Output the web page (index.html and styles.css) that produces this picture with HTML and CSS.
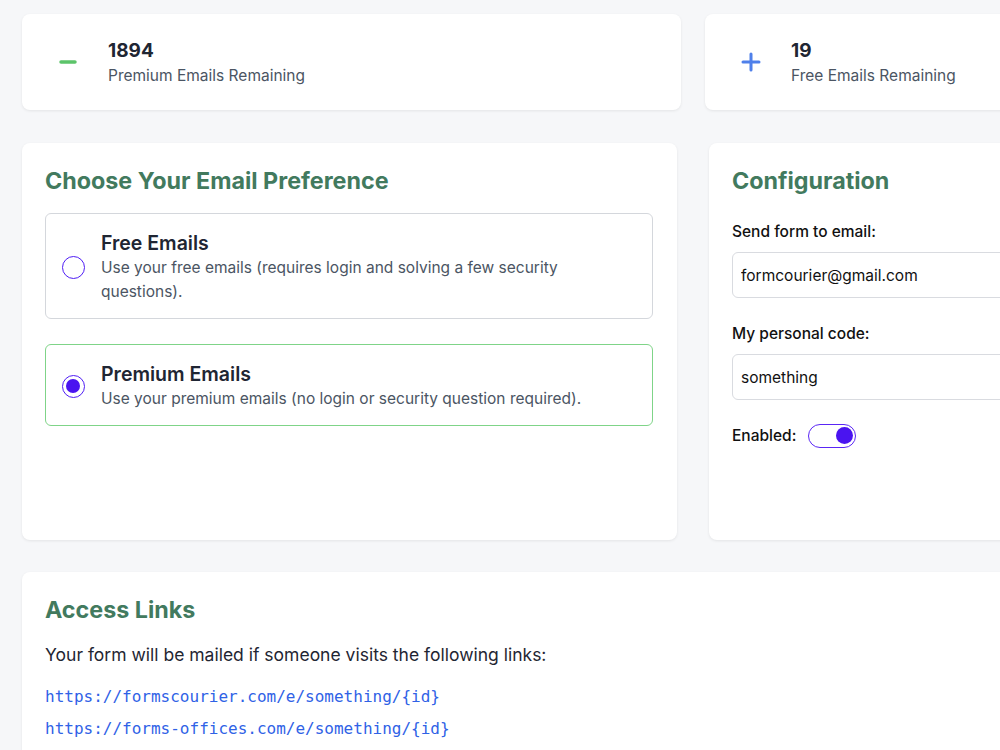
FILE: index.html
```html
<html>

<head>
    <title>Form Courier Settings</title>
    <link rel="stylesheet" href="styles.css">
</head>

<body>
    <div class="page">
        <div class="stats">
            <div class="card stat-card">
                <div class="stat-icon">
                    <svg width="18" height="18" viewBox="0 0 18 18">
                        <line x1="2" y1="9" x2="16" y2="9" stroke="#5cc46a" stroke-width="3.5" stroke-linecap="round" />
                    </svg>
                </div>
                <div>
                    <div class="stat-value">1894</div>
                    <div class="stat-label">Premium Emails Remaining</div>
                </div>
            </div>
            <div class="card stat-card">
                <div class="stat-icon">
                    <svg width="22" height="22" viewBox="0 0 22 22">
                        <line x1="3" y1="11" x2="19" y2="11" stroke="#4f80ea" stroke-width="3" stroke-linecap="round" />
                        <line x1="11" y1="3" x2="11" y2="19" stroke="#4f80ea" stroke-width="3" stroke-linecap="round" />
                    </svg>
                </div>
                <div>
                    <div class="stat-value">19</div>
                    <div class="stat-label">Free Emails Remaining</div>
                </div>
            </div>
        </div>

        <div class="settings">
            <div class="card panel">
                <h2>Choose Your Email Preference</h2>
                <label class="option">
                    <input type="radio" name="plan" value="free">
                    <div>
                        <div class="option-title">Free Emails</div>
                        <div class="option-desc">Use your free emails (requires login and solving a few security questions).</div>
                    </div>
                </label>
                <label class="option selected">
                    <input type="radio" name="plan" value="premium" checked>
                    <div>
                        <div class="option-title">Premium Emails</div>
                        <div class="option-desc">Use your premium emails (no login or security question required).</div>
                    </div>
                </label>
            </div>

            <div class="card panel">
                <h2>Configuration</h2>
                <div class="field-label">Send form to email:</div>
                <input class="text-input" type="text" value="formcourier@gmail.com">
                <div class="field-label">My personal code:</div>
                <input class="text-input" type="text" value="something">
                <div class="toggle-row">
                    <span class="field-label inline">Enabled:</span>
                    <input class="toggle" type="checkbox" checked>
                </div>
            </div>
        </div>

        <div class="card panel links-panel">
            <h2>Access Links</h2>
            <p class="intro">Your form will be mailed if someone visits the following links:</p>
            <div class="link-list">
                <a href="#">https://formscourier.com/e/something/{id}</a>
                <a href="#">https://forms-offices.com/e/something/{id}</a>
            </div>
        </div>
    </div>
</body>

</html>
```

FILE: styles.css
```css
html,
body {
    overflow: hidden;
}

body {
    margin: 0;
    background: #f6f7f9;
    font-family: Inter, 'Noto Sans', sans-serif;
    color: #1f2937;
}

.page {
    width: 1342px;
    padding: 14px 0 0 22px;
}

.card {
    background: #ffffff;
    border-radius: 8px;
    box-shadow: 0 1px 3px rgba(0, 0, 0, 0.08);
}

/* Top counters */
.stats {
    display: grid;
    grid-template-columns: 1fr 1fr;
    gap: 24px;
}

.stat-card {
    height: 96px;
    box-sizing: border-box;
    padding-left: 26px;
    display: flex;
    align-items: center;
    gap: 20px;
}

.stat-icon {
    width: 40px;
    height: 40px;
    display: flex;
    align-items: center;
    justify-content: center;
}

.stat-value {
    font-size: 19px;
    font-weight: 700;
    line-height: 26px;
    color: #1f2633;
    padding-top: 2px;
}

.stat-label {
    font-size: 15.5px;
    line-height: 24px;
    color: #4b5563;
}

/* Preference + configuration */
.settings {
    display: grid;
    grid-template-columns: 1fr 1fr;
    gap: 32px;
    margin-top: 33px;
}

.panel {
    padding: 23px 24px 23px 23px;
    box-sizing: border-box;
}

.settings .panel {
    height: 397px;
}

.panel h2 {
    margin: 0;
    font-size: 23.3px;
    line-height: 30px;
    font-weight: 700;
    color: #427a5e;
}

.option {
    display: flex;
    align-items: center;
    gap: 16px;
    margin-top: 17px;
    padding: 16px 16px 14px 16px;
    border: 1px solid #d4d7dc;
    border-radius: 6px;
    cursor: pointer;
}

.option + .option {
    margin-top: 25px;
}

.option.selected {
    border-color: #7fd488;
}

.option input[type="radio"] {
    appearance: none;
    flex: none;
    margin: 0;
    width: 23px;
    height: 23px;
    border: 1.5px solid #4f1df5;
    border-radius: 50%;
    box-sizing: border-box;
    position: relative;
}

.option input[type="radio"]:checked::after {
    content: "";
    position: absolute;
    left: 3px;
    top: 3px;
    width: 14px;
    height: 14px;
    border-radius: 50%;
    background: #4a14f0;
}

.option-title {
    font-size: 19.5px;
    line-height: 26px;
    font-weight: 600;
    color: #1f2633;
}

.option-desc {
    font-size: 15.5px;
    line-height: 24px;
    color: #4b5563;
}

.field-label {
    font-size: 15.5px;
    line-height: 22px;
    font-weight: 500;
    color: #111111;
    margin-top: 25px;
}

.field-label.inline {
    margin-top: 0;
}

.text-input {
    display: block;
    width: 100%;
    box-sizing: border-box;
    height: 46px;
    margin-top: 9px;
    padding: 0 8px;
    border: 1px solid #d9dbe0;
    border-radius: 6px;
    font-family: Inter, sans-serif;
    font-size: 15.5px;
    color: #111111;
    background: #ffffff;
}

.toggle-row {
    display: flex;
    align-items: center;
    gap: 12px;
    margin-top: 24px;
}

.toggle {
    appearance: none;
    margin: 0;
    width: 48px;
    height: 24px;
    border: 1.5px solid #5a26f5;
    border-radius: 12px;
    box-sizing: border-box;
    position: relative;
    background: #ffffff;
}

.toggle:checked::after {
    content: "";
    position: absolute;
    right: 2.5px;
    top: 2px;
    width: 17px;
    height: 17px;
    border-radius: 50%;
    background: #4a14f0;
}

/* Access links */
.links-panel {
    margin-top: 32px;
    height: 400px;
}

.intro {
    margin: 17px 0 0;
    font-size: 17.5px;
    line-height: 26px;
    color: #1f2633;
}

.link-list {
    display: flex;
    flex-direction: column;
    gap: 8px;
    margin-top: 17px;
}

.link-list a {
    font-family: 'DejaVu Sans Mono', 'Liberation Mono', monospace;
    font-size: 16px;
    line-height: 24px;
    color: #2f62e6;
    text-decoration: none;
}
```
